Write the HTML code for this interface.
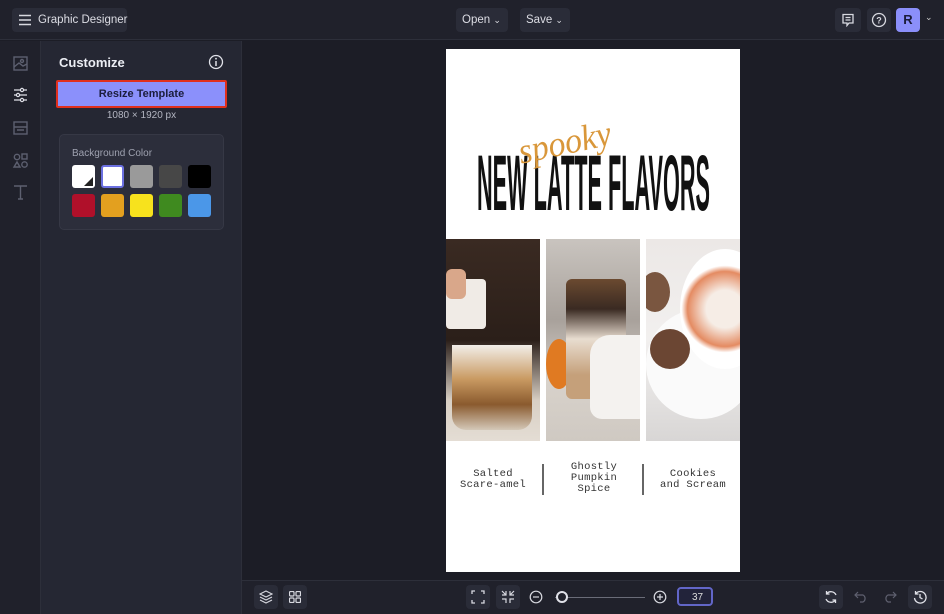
<!DOCTYPE html>
<html><head><style>
*{box-sizing:border-box;margin:0;padding:0}
body{width:944px;height:614px;overflow:hidden;background:#1c1d26;font-family:"Liberation Sans",sans-serif;position:relative;color:#e6e7ee}
.abs{position:absolute}
.btn{position:absolute;background:#2a2c38;border-radius:4px}
.sw{position:absolute;width:23px;height:23px;border-radius:3px}
.icn{stroke:#5d6070;fill:none;stroke-width:1.4}
.ph{position:absolute;overflow:hidden}
.ph div{position:absolute}
.tt{position:absolute;top:8px;height:24px;line-height:24px;font-size:11.5px;color:#dcdde4}
</style></head><body>
<!-- top bar -->
<div class="abs" style="left:0;top:0;width:944px;height:40px;background:#20212b;border-bottom:1px solid #2d2f3a"></div>
<div class="btn" style="left:12px;top:8px;width:115px;height:24px"></div>
<svg class="abs" style="left:18px;top:14px" width="14" height="12"><path d="M1 1.5H13M1 6H13M1 10.5H13" stroke="#d8d9e0" stroke-width="1.4"/></svg>
<div class="tt" style="left:38px">Graphic Designer</div>
<div class="btn" style="left:456px;top:8px;width:52px;height:24px"></div>
<div class="tt" style="left:462px">Open <span style="font-size:9px">⌄</span></div>
<div class="btn" style="left:520px;top:8px;width:50px;height:24px"></div>
<div class="tt" style="left:526px">Save <span style="font-size:9px">⌄</span></div>
<div class="btn" style="left:835px;top:8px;width:26px;height:24px"></div>
<svg class="abs" style="left:841px;top:13px" width="14" height="14"><path d="M2 1.5H12V10H8L6 12.5V10H2Z M4.5 4.5H9.5M4.5 7H9.5" stroke="#d8d9e0" fill="none" stroke-width="1.3"/></svg>
<div class="btn" style="left:867px;top:8px;width:24px;height:24px"></div>
<svg class="abs" style="left:871px;top:12px" width="16" height="16"><circle cx="8" cy="8" r="6.5" stroke="#d8d9e0" fill="none" stroke-width="1.3"/><text x="8" y="11.5" font-size="9" fill="#d8d9e0" text-anchor="middle" font-family="Liberation Sans" font-weight="bold">?</text></svg>
<div class="abs" style="left:896px;top:8px;width:24px;height:24px;background:#8b8ffa;border-radius:4px;color:#1b1c3a;font-weight:bold;font-size:13px;text-align:center;line-height:24px">R</div>
<div class="abs" style="left:925px;top:12px;font-size:9px;color:#ccc">⌄</div>
<!-- left strip -->
<div class="abs" style="left:0;top:41px;width:41px;height:573px;background:#20212b;border-right:1px solid #2d2f3a"></div>
<svg class="abs" style="left:12px;top:55px" width="18" height="170">
<rect x="2" y="2" width="13" height="13" class="icn"/><path d="M2 12L7 8L11 11L15 9" class="icn"/><circle cx="10" cy="6" r="1.5" class="icn"/>
<path d="M2 35H15M2 40H15M2 45H15" stroke="#e0e1e8" stroke-width="1.3"/><circle cx="10" cy="35" r="1.6" fill="#20212b" stroke="#e0e1e8" stroke-width="1.2"/><circle cx="6" cy="40" r="1.6" fill="#20212b" stroke="#e0e1e8" stroke-width="1.2"/><circle cx="10" cy="45" r="1.6" fill="#20212b" stroke="#e0e1e8" stroke-width="1.2"/>
<rect x="2" y="67" width="13" height="12" class="icn"/><path d="M2 72H15M5 75H12" class="icn"/>
<circle cx="5" cy="102" r="2.7" class="icn"/><rect x="10" y="99" width="5" height="5" class="icn"/><path d="M5 107L2 112H8Z" class="icn"/><circle cx="12.5" cy="109.5" r="2.7" class="icn"/>
<path d="M2 131H15M8.5 131V144M6 144H11" class="icn"/>
</svg>
<!-- panel -->
<div class="abs" style="left:41px;top:41px;width:201px;height:573px;background:#252733;border-right:1px solid #2d2f3a"></div>
<div class="abs" style="left:59px;top:55px;font-size:13px;font-weight:bold;color:#eceef4">Customize</div>
<svg class="abs" style="left:208px;top:54px" width="16" height="16"><circle cx="8" cy="8" r="6.5" stroke="#e0e1e8" fill="none" stroke-width="1.3"/><path d="M8 7V12" stroke="#e0e1e8" stroke-width="1.5"/><circle cx="8" cy="4.7" r="0.9" fill="#e0e1e8"/></svg>
<div class="abs" style="left:56px;top:80px;width:171px;height:28px;border:2px solid #e0301e;border-radius:2px;background:#8b90fb"></div>
<div class="abs" style="left:56px;top:88px;width:171px;text-align:center;font-size:11px;font-weight:bold;color:#1b1d3c">Resize Template</div>
<div class="abs" style="left:56px;top:110px;width:171px;text-align:center;font-size:10px;color:#b4b6c2">1080 × 1920 px</div>
<div class="abs" style="left:59px;top:134px;width:165px;height:96px;background:#2c2e3b;border:1px solid #363845;border-radius:5px"></div>
<div class="abs" style="left:72px;top:148px;font-size:10px;color:#9fa2b0">Background Color</div>
<div class="sw" style="left:72px;top:165px;background:#fff;overflow:hidden"><div style="position:absolute;right:2px;bottom:2px;width:0;height:0;border-left:9px solid transparent;border-bottom:9px solid #222"></div></div>
<div class="sw" style="left:101px;top:165px;background:#fff;border:2px solid #6b70e0"></div>
<div class="sw" style="left:130px;top:165px;background:#9a9a9a"></div>
<div class="sw" style="left:159px;top:165px;background:#474747"></div>
<div class="sw" style="left:188px;top:165px;background:#000"></div>
<div class="sw" style="left:72px;top:194px;background:#b0102a"></div>
<div class="sw" style="left:101px;top:194px;background:#e3a01f"></div>
<div class="sw" style="left:130px;top:194px;background:#f7e21d"></div>
<div class="sw" style="left:159px;top:194px;background:#3f8a1f"></div>
<div class="sw" style="left:188px;top:194px;background:#4b97e8"></div>
<!-- canvas page -->
<div class="abs" style="left:446px;top:49px;width:294px;height:523px;background:#fff"></div>
<svg class="abs" style="left:446px;top:110px" width="294" height="110">
<text x="31" y="100" font-family="Liberation Sans Narrow, Liberation Sans, sans-serif" font-weight="bold" font-size="79" fill="#111" textLength="233" lengthAdjust="spacingAndGlyphs">NEW LATTE FLAVORS</text>
<text x="72" y="44" font-family="Liberation Serif, serif" font-style="italic" font-size="36" fill="#d9973a" textLength="94" lengthAdjust="spacingAndGlyphs" transform="rotate(-12 120 34)">spooky</text>
</svg>
<!-- photos -->
<div class="ph" style="left:446px;top:239px;width:94px;height:202px;background:linear-gradient(180deg,#3a2a22 0%,#2b1f19 50%,#d8cfc4 80%,#e4ddd4 100%)">
<div style="left:6px;top:106px;width:80px;height:85px;background:linear-gradient(180deg,#f2eee9 0%,#c99a62 40%,#8a5a2e 70%,#d4c8b8 100%);border-radius:0 0 14px 14px"></div>
<div style="left:0;top:40px;width:40px;height:50px;background:#f0ebe6;border-radius:4px"></div>
<div style="left:0;top:30px;width:20px;height:30px;background:#d9a78a;border-radius:6px"></div>
</div>
<div class="ph" style="left:546px;top:239px;width:94px;height:202px;background:linear-gradient(180deg,#c9c4bf 0%,#a8a19b 40%,#d8d2cb 70%,#cfc9c2 100%)">
<div style="left:0;top:100px;width:26px;height:50px;background:#e07a22;border-radius:50%"></div>
<div style="left:20px;top:40px;width:60px;height:120px;background:linear-gradient(180deg,#6b4a30,#3a2a22 25%,#e8ddd0 50%,#c5a07a 80%);border-radius:6px"></div>
<div style="left:44px;top:96px;width:60px;height:84px;background:#f4f2ef;border-radius:20px 0 12px 12px"></div>
</div>
<div class="ph" style="left:646px;top:239px;width:94px;height:202px;background:linear-gradient(180deg,#ece8e6,#f2f0ef 50%,#d8d6d5)">
<div style="left:0;top:70px;width:110px;height:110px;background:#fafafa;border-radius:50%"></div>
<div style="left:34px;top:10px;width:90px;height:120px;background:radial-gradient(circle,#f6ede6 25%,#e48b62 50%,#fff 58%);border-radius:50%"></div>
<div style="left:4px;top:90px;width:40px;height:40px;background:#6b4633;border-radius:50%"></div>
<div style="left:-6px;top:33px;width:30px;height:40px;background:#7a5640;border-radius:50%"></div>
</div>
<!-- labels -->
<div class="abs" style="left:446px;top:469px;width:94px;text-align:center;font-family:'Liberation Mono',monospace;font-size:10.5px;line-height:11px;color:#333;letter-spacing:0.3px">Salted<br>Scare-amel</div>
<div class="abs" style="left:542px;top:464px;width:2px;height:31px;background:#666"></div>
<div class="abs" style="left:546px;top:462px;width:96px;text-align:center;font-family:'Liberation Mono',monospace;font-size:10.5px;line-height:11px;color:#333;letter-spacing:0.3px">Ghostly<br>Pumpkin<br>Spice</div>
<div class="abs" style="left:642px;top:464px;width:2px;height:31px;background:#666"></div>
<div class="abs" style="left:646px;top:469px;width:94px;text-align:center;font-family:'Liberation Mono',monospace;font-size:10.5px;line-height:11px;color:#333;letter-spacing:0.3px">Cookies<br>and Scream</div>
<!-- bottom bar -->
<div class="abs" style="left:242px;top:580px;width:702px;height:34px;background:#20212b;border-top:1px solid #2d2f3a"></div>
<div class="btn" style="left:254px;top:585px;width:24px;height:24px"></div>
<svg class="abs" style="left:259px;top:590px" width="14" height="14"><path d="M7 1L13 4L7 7L1 4Z M1 7L7 10L13 7 M1 10L7 13L13 10" stroke="#d8d9e0" fill="none" stroke-width="1.1"/></svg>
<div class="btn" style="left:283px;top:585px;width:24px;height:24px"></div>
<svg class="abs" style="left:289px;top:591px" width="12" height="12"><g stroke="#d8d9e0" fill="none" stroke-width="1.2"><rect x="0.5" y="0.5" width="4.5" height="4.5" rx="1"/><rect x="7" y="0.5" width="4.5" height="4.5" rx="1"/><rect x="0.5" y="7" width="4.5" height="4.5" rx="1"/><rect x="7" y="7" width="4.5" height="4.5" rx="1"/></g></svg>
<div class="btn" style="left:466px;top:585px;width:24px;height:24px"></div>
<svg class="abs" style="left:471px;top:590px" width="14" height="14"><path d="M1 4V1H4M10 1H13V4M13 10V13H10M4 13H1V10" stroke="#d8d9e0" fill="none" stroke-width="1.3"/></svg>
<div class="btn" style="left:496px;top:585px;width:24px;height:24px"></div>
<svg class="abs" style="left:501px;top:590px" width="14" height="14"><path d="M1 5H5V1M9 1V5H13M13 9H9V13M5 13V9H1M5 5L1 1M9 5L13 1" stroke="#d8d9e0" fill="none" stroke-width="1.2"/></svg>
<svg class="abs" style="left:529px;top:590px" width="14" height="14"><circle cx="7" cy="7" r="5.8" stroke="#d8d9e0" fill="none" stroke-width="1.2"/><path d="M4 7H10" stroke="#d8d9e0" stroke-width="1.2"/></svg>
<div class="abs" style="left:555px;top:597px;width:90px;height:1px;background:#6a6c78"></div>
<div class="abs" style="left:556px;top:591px;width:12px;height:12px;border-radius:50%;background:#20212b;border:2px solid #e0e1e8"></div>
<svg class="abs" style="left:653px;top:590px" width="14" height="14"><circle cx="7" cy="7" r="5.8" stroke="#d8d9e0" fill="none" stroke-width="1.2"/><path d="M4 7H10M7 4V10" stroke="#d8d9e0" stroke-width="1.2"/></svg>
<div class="abs" style="left:677px;top:587px;width:36px;height:19px;border:2px solid #6266c8;border-radius:4px;background:#22233a;font-size:10px;color:#ddd;padding:3px 0 0 13px">37</div>
<div class="btn" style="left:819px;top:585px;width:24px;height:24px"></div>
<svg class="abs" style="left:824px;top:590px" width="14" height="14"><path d="M12 5A5.5 5.5 0 0 0 2.5 4M2 9A5.5 5.5 0 0 0 11.5 10M2.5 1V4H5.5M11.5 13V10H8.5" stroke="#e0e1e8" fill="none" stroke-width="1.3"/></svg>
<svg class="abs" style="left:854px;top:591px" width="14" height="12"><path d="M4 1L1 4L4 7M1 4H9A4 4 0 0 1 9 11H6" stroke="#5f6170" fill="none" stroke-width="1.2"/></svg>
<svg class="abs" style="left:883px;top:591px" width="14" height="12"><path d="M10 1L13 4L10 7M13 4H5A4 4 0 0 0 5 11H8" stroke="#5f6170" fill="none" stroke-width="1.2"/></svg>
<div class="btn" style="left:908px;top:585px;width:24px;height:24px"></div>
<svg class="abs" style="left:913px;top:590px" width="14" height="14"><path d="M2.5 4A5.8 5.8 0 1 1 1.5 8M2.5 1V4H5.5M7 4V7.5L9.5 9" stroke="#e0e1e8" fill="none" stroke-width="1.3"/></svg>
</body></html>
